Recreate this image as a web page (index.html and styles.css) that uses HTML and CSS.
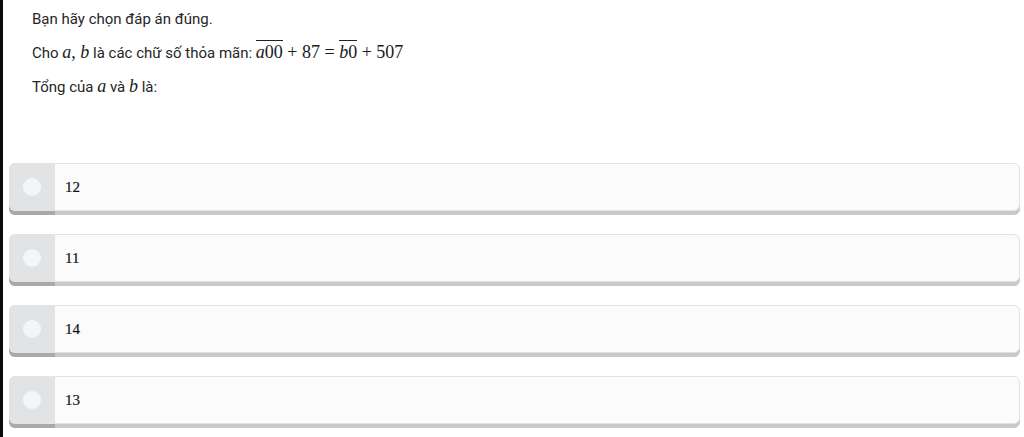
FILE: index.html
```html
<!DOCTYPE html>
<html lang="vi">
<head>
<meta charset="utf-8">
<link rel="stylesheet" href="styles.css">
</head>
<body>
<div class="page">
  <div class="question">
    <p class="line">Bạn hãy chọn đáp án đúng.</p>
    <p class="line">Cho <span class="m"><i>a</i>, <i>b</i></span> là các chữ số thỏa mãn: <span class="m"><span class="ov"><i>a</i>00</span> + 87 = <span class="ov"><i>b</i>0</span> + 507</span></p>
    <p class="line">Tổng của <span class="m"><i>a</i></span> và <span class="m"><i>b</i></span> là:</p>
  </div>
  <div class="options">
    <label class="opt"><span class="radio"><span class="dot"></span></span><span class="val">12</span></label>
    <label class="opt"><span class="radio"><span class="dot"></span></span><span class="val">11</span></label>
    <label class="opt"><span class="radio"><span class="dot"></span></span><span class="val">14</span></label>
    <label class="opt"><span class="radio"><span class="dot"></span></span><span class="val">13</span></label>
  </div>
</div>
</body>
</html>
```
FILE: styles.css
```css
html, body { margin: 0; padding: 0; background: #fff; }
body { border-left: 3px solid #0a0a0a; min-height: 437px; box-sizing: border-box; overflow: hidden; }
.page { padding: 9px 0 0 0; }
.question { padding-left: 29px; font-family: Roboto, "Liberation Sans", Arial, sans-serif; font-size: 15px; color: #262626; }
.line { margin: 0 0 13px 0; line-height: 20px; }
.m { font-family: "Liberation Serif", "DejaVu Serif", serif; font-size: 18px; color: #1a1a1a; }
.m i { font-style: italic; }
.ov { border-top: 1px solid #222; padding-top: 1px; }
.options { margin-top: 66px; padding-left: 6px; padding-right: 4px; display: flex; flex-direction: column; gap: 23px; }
.opt { display: flex; height: 46px; background: #fbfbfb; border: 1px solid #e2e2e2; border-radius: 6px; box-shadow: 0 4px 0 #c9c9c9; position: relative; }
.radio { width: 46px; flex: none; background: #e1e3e5; border-radius: 6px 0 0 6px; display: flex; align-items: center; justify-content: center; box-shadow: 0 4px 0 #a9a9a9; margin: -1px 0 -1px -1px; }
.dot { width: 18px; height: 18px; border-radius: 50%; background: #f4f5f6; }
.val { display: flex; align-items: center; padding-left: 10px; font-family: "Liberation Serif", "DejaVu Serif", serif; font-size: 15px; color: #111; -webkit-text-stroke: 0.2px #111; }
```
